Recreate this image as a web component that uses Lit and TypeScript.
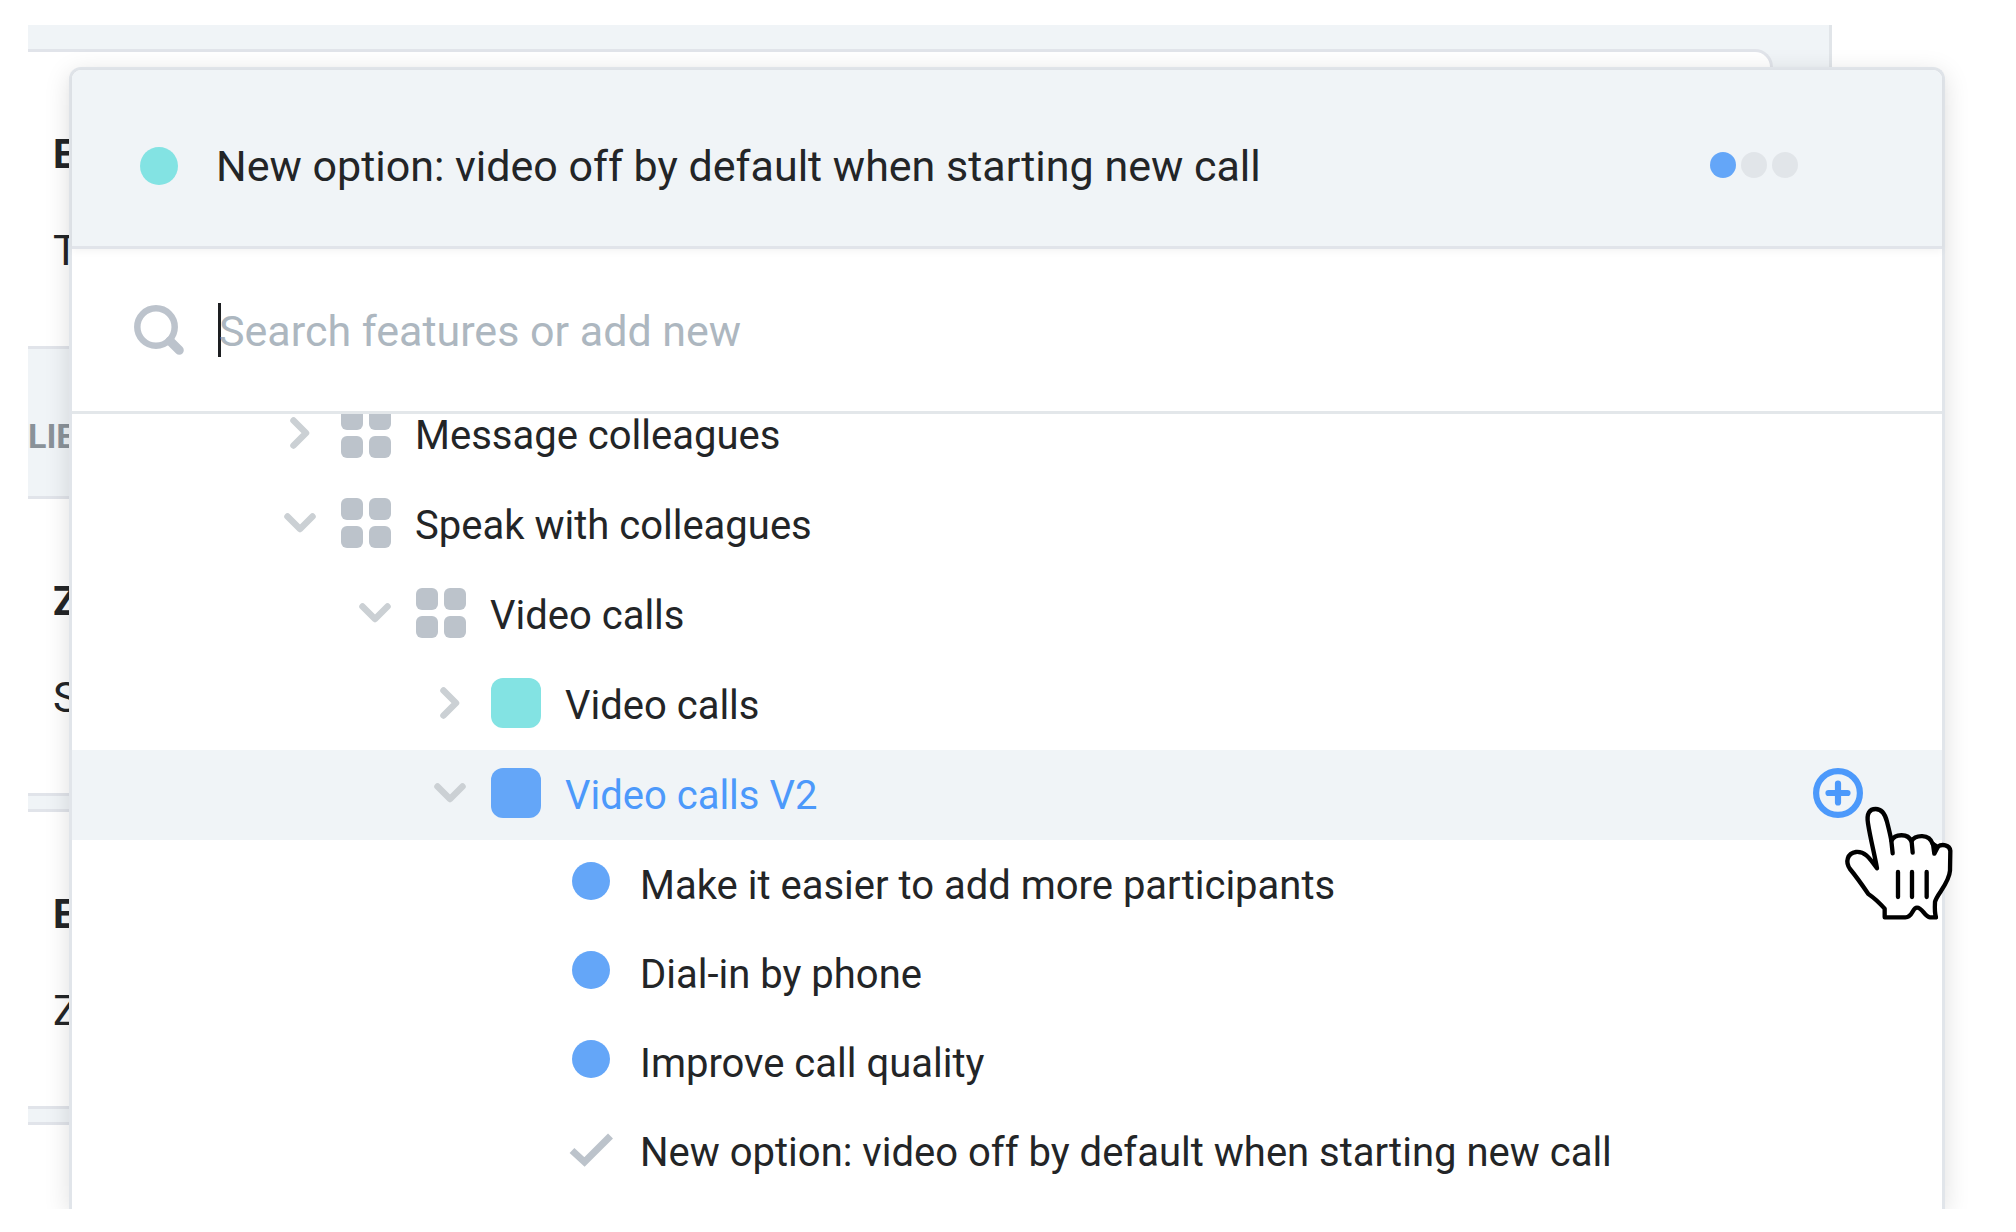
import { LitElement, html, css, svg, nothing } from "lit";
import { customElement, state } from "lit/decorators.js";
import { classMap } from "lit/directives/class-map.js";

type Kind = "component" | "teal" | "blue" | "dot" | "check";
type Chevron = "right" | "down";

interface TreeItem {
  depth: number;
  kind: Kind;
  label: string;
  chevron?: Chevron;
  selected?: boolean;
}

const ITEMS: TreeItem[] = [
  { depth: 0, kind: "component", label: "Message colleagues", chevron: "right" },
  { depth: 0, kind: "component", label: "Speak with colleagues", chevron: "down" },
  { depth: 1, kind: "component", label: "Video calls", chevron: "down" },
  { depth: 2, kind: "teal", label: "Video calls", chevron: "right" },
  { depth: 2, kind: "blue", label: "Video calls V2", chevron: "down", selected: true },
  { depth: 3, kind: "dot", label: "Make it easier to add more participants" },
  { depth: 3, kind: "dot", label: "Dial-in by phone" },
  { depth: 3, kind: "dot", label: "Improve call quality" },
  { depth: 3, kind: "check", label: "New option: video off by default when starting new call" },
];

const INDENT = 75;

const componentIcon = html`<svg class="icon" width="50" height="50" viewBox="0 0 50 50" aria-hidden="true">
  ${[0, 28].map((y) => [0, 28].map((x) => svg`<rect x=${x} y=${y} width="22" height="22" rx="6" fill="#bcc3cb" />`))}
</svg>`;

const squareIcon = (color: string) => html`<svg class="icon" width="50" height="50" viewBox="0 0 50 50" aria-hidden="true">
  <rect width="50" height="50" rx="12" fill=${color} />
</svg>`;

const dotIcon = html`<svg class="icon" width="50" height="50" viewBox="0 0 50 50" aria-hidden="true">
  <circle cx="25" cy="23" r="19" fill="#64a6f8" />
</svg>`;

const checkIcon = html`<svg class="icon" width="50" height="50" viewBox="0 0 50 50" aria-hidden="true">
  <path d="M6 25.5 L18.5 37 L44.5 11" fill="none" stroke="#bcc3cb" stroke-width="7" />
</svg>`;

const chevronIcon = (dir: Chevron) => html`<svg class="icon" width="32" height="32" viewBox="0 0 32 32" aria-hidden="true">
  <path
    d=${dir === "right" ? "M9.5 3.5 L22 16 L9.5 28.5" : "M3.5 9.5 L16 22 L28.5 9.5"}
    fill="none"
    stroke="#cbd0d4"
    stroke-width="6.5"
    stroke-linecap="round"
    stroke-linejoin="round"
  />
</svg>`;

const handCursor = html`<svg class="hand" width="112" height="117" viewBox="249 255 336 351" aria-hidden="true">
  <g stroke="#000" stroke-width="13" stroke-linecap="round" stroke-linejoin="round">
    <path
      fill="#fff"
      d="M351 445 C344 405 331 355 324 310 C319 280 329 267 347 267 C366 267 376 285 381 305 C387 328 391 345 394 362
         C404 342 444 338 454 364 C466 344 508 340 518 372 C526 376 530 380 533 380
         C546 371 569 374 571 392 L570 452 C567 492 530 522 525 546 C524 565 524 580 528 592
         L510 592 C493 590 488 563 471 563 C456 563 459 592 436 592 L374 592 L374 566
         C355 545 340 532 325 522 C310 500 285 465 270 447 C255 425 262 400 288 396 C313 394 325 408 351 445 Z"
    />
    <path fill="none" d="M394 362 L398 400 M455 366 L458 398 M519 372 L523 401 L533 382 M414 456 V531 M456 456 V531 M500 456 V531" />
  </g>
</svg>`;

@customElement("app-root")
export class AppRoot extends LitElement {
  static styles = css`
    :host {
      display: grid;
      box-sizing: border-box;
      min-height: 100vh;
      padding: 25px 0 23px 28px;
      background: #fff;
      color: #232527;
      font-family: Roboto, "Liberation Sans", sans-serif;
      font-size: 40px;
      line-height: 48px;
    }
    * {
      box-sizing: border-box;
    }
    .stage {
      display: grid;
      overflow: hidden;
    }
    .backdrop,
    .panel {
      grid-area: 1 / 1;
      display: flex;
      flex-direction: column;
    }

    .backdrop {
      margin-right: 184px;
      padding: 24px 56px 0 0;
      gap: 13px;
      background: #f0f4f7;
      border-right: 3px solid #e1e5e9;
    }
    .card {
      background: #fff;
      border: solid #e1e4ea;
      border-width: 3px 3px 3px 0;
    }
    .card:first-child {
      border-top-right-radius: 18px;
    }
    .card:last-child {
      flex: 1;
      border-bottom: 0;
    }
    .note {
      display: flex;
      flex-direction: column;
      gap: 47px;
      height: 294px;
      padding: 79px 0 0 25px;
    }
    .note h3,
    .note p,
    .section {
      margin: 0;
    }
    .note h3 {
      font-size: 40px;
      font-weight: 700;
    }
    .note p {
      font-size: 43px;
    }
    .section {
      height: 153px;
      padding-top: 63px;
      background: #f0f4f7;
      border: solid #e1e4ea;
      border-width: 3px 0;
      color: #8a9299;
      font-size: 34px;
      font-weight: 700;
    }

    .panel {
      margin: 42px 71px 0 41px;
      background: #fff;
      border: 3px solid #e1e5ea;
      border-bottom: 0;
      border-radius: 12px 12px 0 0;
      box-shadow: 0 6px 26px rgba(0, 0, 0, 0.13);
    }
    .header {
      display: flex;
      align-items: center;
      gap: 38px;
      height: 179px;
      padding: 16px 144px 0 68px;
      background: #f0f4f7;
      border-bottom: 3px solid #e1e4ea;
      border-radius: 9px 9px 0 0;
      box-shadow: 0 2px 8px rgba(0, 0, 0, 0.05);
    }
    .status {
      width: 38px;
      height: 38px;
      border-radius: 50%;
      background: #83e3e3;
    }
    .title {
      flex: 1;
      margin: 0;
      font-size: 43px;
      font-weight: 400;
    }
    .steps {
      display: flex;
      gap: 5px;
      padding-bottom: 3px;
    }
    .step {
      width: 26px;
      height: 26px;
      border-radius: 50%;
      background: #e1e5e9;
    }
    .step.on {
      background: #64a6f8;
    }

    .search {
      display: flex;
      align-items: center;
      height: 165px;
      padding: 0 68px 0 62px;
      border-bottom: 3px solid #e3e7ea;
    }
    .caret {
      width: 3px;
      height: 54px;
      margin: 0 -2px 0 34px;
      background: #1d1f21;
    }
    .search input {
      flex: 1;
      min-width: 0;
      padding: 2px 0 0;
      border: 0;
      outline: 0;
      background: transparent;
      color: inherit;
      caret-color: transparent;
      font: inherit;
      font-size: 43px;
    }
    .search input::placeholder {
      color: #adb7c0;
      opacity: 1;
    }

    .tree {
      flex: 1;
      margin: 0;
      padding: 0;
      list-style: none;
      overflow-x: visible;
      overflow-y: clip;
    }
    .row {
      display: flex;
      align-items: center;
      height: 90px;
      padding: 0 79px 0 212px;
    }
    .row:first-child {
      margin-top: -24px;
    }
    .row.leaf {
      height: 89px;
      padding-left: 269px;
    }
    .row.selected {
      background: #f0f4f7;
    }
    .icon {
      display: block;
      flex: none;
    }
    button {
      display: block;
      margin: 0;
      padding: 0;
      border: 0;
      background: none;
      color: inherit;
      font: inherit;
      text-align: left;
      cursor: pointer;
    }
    .toggle {
      margin-right: 25px;
      padding-bottom: 4px;
    }
    .item {
      display: flex;
      flex: 1;
      align-items: center;
      gap: 24px;
      padding-top: 2px;
      white-space: nowrap;
    }
    .item .icon {
      margin-bottom: 6px;
    }
    .selected .item {
      color: #4c99fb;
    }
    .adder {
      position: relative;
      margin-bottom: 4px;
    }
    .hand {
      position: absolute;
      left: 30px;
      top: 37px;
      z-index: 1;
      pointer-events: none;
    }
  `;

  @state() private query = "";

  private icon(kind: Kind) {
    switch (kind) {
      case "component":
        return componentIcon;
      case "teal":
        return squareIcon("#83e3e3");
      case "blue":
        return squareIcon("#64a6f8");
      case "dot":
        return dotIcon;
      case "check":
        return checkIcon;
    }
  }

  private row(item: TreeItem) {
    return html`<li class=${classMap({ row: true, leaf: !item.chevron, selected: !!item.selected })}>
      <span style="width:${item.depth * INDENT}px"></span>
      ${item.chevron
        ? html`<button class="toggle" aria-label="Toggle ${item.label}" aria-expanded=${item.chevron === "down"}>
            ${chevronIcon(item.chevron)}
          </button>`
        : nothing}
      <button class="item">${this.icon(item.kind)}<span>${item.label}</span></button>
      ${item.selected
        ? html`<div class="adder">
            <button aria-label="Add to ${item.label}">
              <svg class="icon" width="50" height="50" viewBox="0 0 50 50" aria-hidden="true">
                <g fill="none" stroke="#4c99fb" stroke-width="6.2" stroke-linecap="round">
                  <circle cx="25" cy="25" r="21.9" />
                  <path d="M15.5 25 H34.5 M25 15.5 V34.5" />
                </g>
              </svg>
            </button>
            ${handCursor}
          </div>`
        : nothing}
    </li>`;
  }

  render() {
    return html`<div class="stage">
      <div class="backdrop">
        <div class="card">
          <div class="note"><h3>E</h3><p>T</p></div>
          <h2 class="section">LIE</h2>
          <div class="note"><h3>Z</h3><p>S</p></div>
        </div>
        <div class="card">
          <div class="note"><h3>E</h3><p>Z</p></div>
        </div>
        <div class="card"></div>
      </div>
      <main class="panel">
        <header class="header">
          <span class="status"></span>
          <h1 class="title">New option: video off by default when starting new call</h1>
          <div class="steps"><span class="step on"></span><span class="step"></span><span class="step"></span></div>
        </header>
        <label class="search">
          <svg class="icon" width="50" height="50" viewBox="0 0 50 50" aria-hidden="true">
            <g fill="none" stroke="#bcc3cc" stroke-linecap="round">
              <circle cx="22" cy="22" r="18.7" stroke-width="6.5" />
              <path d="M36 36 L45.3 45.3" stroke-width="9" />
            </g>
          </svg>
          <span class="caret"></span>
          <input
            type="text"
            aria-label="Search features or add new"
            placeholder="Search features or add new"
            .value=${this.query}
            @input=${(e: Event) => (this.query = (e.target as HTMLInputElement).value)}
          />
        </label>
        <ul class="tree">
          ${ITEMS.map((item) => this.row(item))}
        </ul>
      </main>
    </div>`;
  }
}
